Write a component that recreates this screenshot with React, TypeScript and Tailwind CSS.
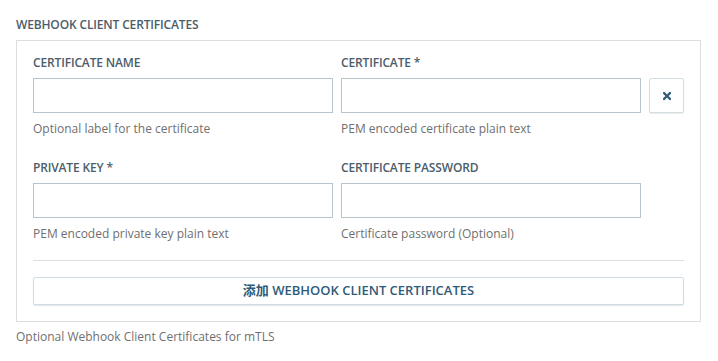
import React from "react";
import { FaTimes } from "react-icons/fa";

const font = { fontFamily: '"Open Sans", "Noto Sans CJK SC", sans-serif' };

function Field({ label, help }: { label: string; help: string }) {
  return (
    <div className="flex flex-col">
      <div className="text-[12px] leading-[16px] font-semibold tracking-[-0.15px] text-[#4c5d6a] uppercase">{label}</div>
      <input className="mt-[7px] h-[35px] w-full border border-[#b7c4cc] bg-white outline-none" />
      <div className="mt-2 text-[12px] leading-[16px] text-[#6f6f6f]">{help}</div>
    </div>
  );
}

export default function App() {
  return (
    <div className="w-[718px] h-[361px] bg-white px-4 pt-[17px]" style={font}>
      <div className="text-[12px] leading-[16px] font-semibold tracking-[-0.15px] text-[#4c5d6a]">WEBHOOK CLIENT CERTIFICATES</div>
      <div className="mt-[7px] w-[685px] border border-[#dcdfe1] px-4 pt-[14px] pb-4">
        <div className="grid grid-cols-[300px_300px_35px] gap-x-2">
          <Field label="Certificate Name" help="Optional label for the certificate" />
          <Field label="Certificate *" help="PEM encoded certificate plain text" />
          <div className="pt-[23px]">
            <button className="flex h-[35px] w-[35px] items-center justify-center rounded-[2px] border border-[#d3dde2] bg-white shadow-[0_1px_1px_rgba(0,0,0,0.08)] text-[#2d5b79]">
              <FaTimes size={12} />
            </button>
          </div>
          <div className="col-start-1 mt-[23px]">
            <Field label="Private Key *" help="PEM encoded private key plain text" />
          </div>
          <div className="mt-[23px]">
            <Field label="Certificate Password" help="Certificate password (Optional)" />
          </div>
        </div>
        <div className="mt-[18px] h-px bg-[#dcdfe1]" />
        <button className="mt-4 flex h-[28px] w-full items-center justify-center rounded-[2px] border border-[#d0dce3] bg-white shadow-[0_1px_1px_rgba(0,0,0,0.1)] text-[13px] font-semibold text-[#2f5b7a]">
          添加 WEBHOOK CLIENT CERTIFICATES
        </button>
      </div>
      <div className="mt-[7px] text-[12px] leading-[16px] text-[#6f6f6f]">Optional Webhook Client Certificates for mTLS</div>
    </div>
  );
}
